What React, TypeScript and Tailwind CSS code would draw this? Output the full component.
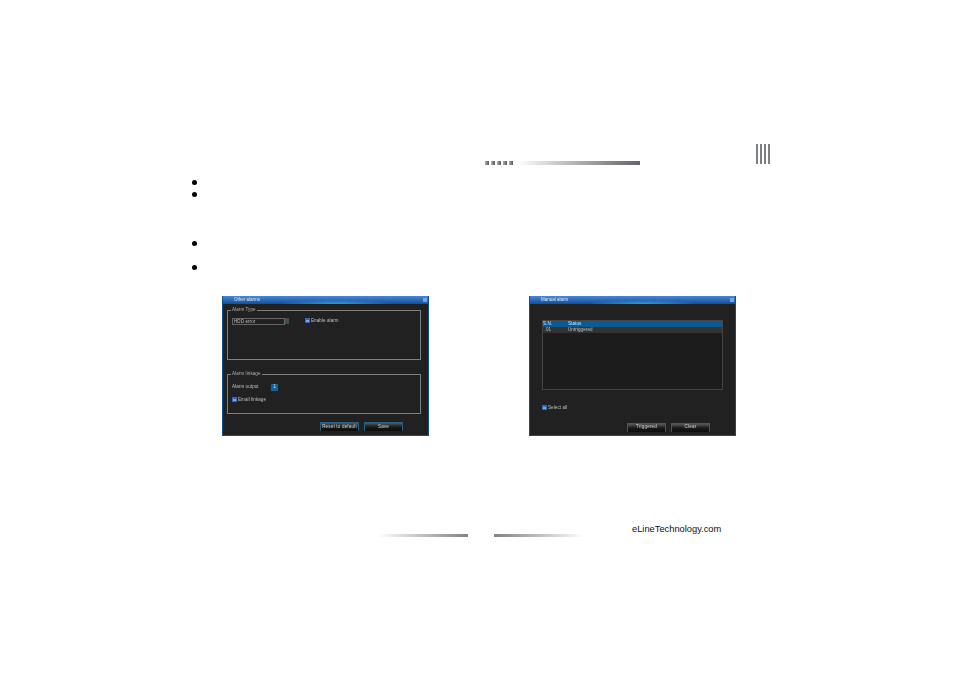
const font = "font-['Liberation_Sans',Arial,sans-serif]";

function Bullet({ className }: { className: string }) {
  return (
    <li className={`flex h-[5px] items-center ${className}`}>
      <span className="h-[5px] w-[5px] rounded-full bg-black" />
    </li>
  );
}

function Checkbox() {
  return (
    <span className="flex h-[5px] w-[5px] items-center justify-center bg-[#2f68c0]">
      <span className="h-[2px] w-[3px] bg-[#7ea6e0]" />
    </span>
  );
}

function Label({ children }: { children: React.ReactNode }) {
  return <span className="pt-[1px] blur-[0.25px]">{children}</span>;
}

function DvrButton({ label }: { label: string }) {
  return (
    <button className="flex h-[9px] w-[39px] items-center justify-center rounded-[1px] border-x border-t border-[#2a5f86] bg-gradient-to-b from-[#55595c] via-[#1a1a1a] to-[#0c0c0c] text-[4.5px] leading-none tracking-[0.2px] text-[#d8d8d8]">
      <span className="blur-[0.2px]">{label}</span>
    </button>
  );
}

function Window({ title, children }: { title: string; children: React.ReactNode }) {
  return (
    <div className="flex h-[140px] w-[207px] flex-col border-x border-b border-[#0f4f8f] bg-[#212121]">
      <div className="flex h-[8px] items-center justify-between bg-[radial-gradient(ellipse_at_55%_100%,#2aa0e8_0%,transparent_35%),linear-gradient(180deg,#4a86d4,#0f4f9c)] pl-[11px] pr-[1px] text-[4.5px] leading-none text-[#dfe8f0]">
        <Label>{title}</Label>
        <span className="h-[4px] w-[4px] bg-[#6fa8dc]" />
      </div>
      {children}
    </div>
  );
}

function Legend({ children }: { children: React.ReactNode }) {
  return (
    <legend className="ml-[3px] px-[1px] text-[4.5px] leading-[6px] tracking-[0.1px] text-[#b0b0b0]">
      <span className="blur-[0.25px]">{children}</span>
    </legend>
  );
}

function OtherAlarm() {
  return (
    <Window title="Other alarms">
      <div className="flex flex-1 flex-col pl-[4px] pr-[7px] pt-[3px] text-[4.5px] leading-none tracking-[0.1px] text-[#c0c0c0]">
        <fieldset className="h-[53px] border border-[#808080]">
          <Legend>Alarm Type</Legend>
          <div className="flex items-start pl-[4px] pt-[5px]">
            <div className="flex h-[7px] w-[53px] items-center border border-[#666] pl-[1px]">
              <Label>HDD error</Label>
            </div>
            <span className="h-[6px] w-[4px] bg-[#37505f]" />
            <span className="ml-[16px] flex items-center gap-[1px]">
              <Checkbox />
              <Label>Enable alarm</Label>
            </span>
          </div>
        </fieldset>
        <fieldset className="mt-[11px] h-[43px] border border-[#808080]">
          <Legend>Alarm linkage</Legend>
          <div className="mt-[7px] flex h-[7px] items-center pl-[4px]">
            <span className="w-[39px]">
              <Label>Alarm output</Label>
            </span>
            <span className="flex h-[7px] w-[7px] items-center justify-center bg-[#14609c] text-[#dfe8f0]">1</span>
          </div>
          <div className="mt-[6px] flex items-center gap-[1px] pl-[4px]">
            <Checkbox />
            <Label>Email linkage</Label>
          </div>
        </fieldset>
        <div className="mt-[8px] flex justify-end gap-[5px] pr-[18px]">
          <DvrButton label="Reset to default" />
          <DvrButton label="Save" />
        </div>
      </div>
    </Window>
  );
}

function ManualAlarm() {
  return (
    <Window title="Manual alarm">
      <div className="flex flex-1 flex-col pl-[12px] pr-[12px] pt-[16px] text-[4.5px] leading-none tracking-[0.1px] text-[#c0c0c0]">
        <div className="h-[70px] border border-[#444] bg-[#1c1c1c]">
          <div className="flex h-[6px] items-center bg-[#0a5a96] text-[#dfe8f0]">
            <span className="w-[25px]">
              <Label>S.N.</Label>
            </span>
            <Label>Status</Label>
          </div>
          <div className="flex h-[6px] items-center bg-[#333333] pl-[3px]">
            <span className="w-[22px]">
              <Label>01</Label>
            </span>
            <Label>Untriggered</Label>
          </div>
        </div>
        <div className="mt-[15px] flex items-center gap-[1px]">
          <Checkbox />
          <Label>Select all</Label>
        </div>
        <div className="mt-[12px] flex justify-end gap-[5px] pr-[13px]">
          <DvrButton label="Triggered" />
          <DvrButton label="Clear" />
        </div>
      </div>
    </Window>
  );
}

export default function App() {
  return (
    <div className={`h-[675px] w-[954px] overflow-hidden bg-white ${font}`}>
      {/* page header strip */}
      <div className="box-content flex h-[21px] items-end pl-[485px] pt-[144px]">
        <div className="flex h-[4px] gap-[2px]">
          {[0, 1, 2, 3, 4].map((i) => (
            <span key={i} className="h-[4px] w-[4px] bg-gradient-to-r from-[#b0b3b6] to-[#55595d]" />
          ))}
        </div>
        <div className="ml-[4px] h-[4px] w-[123px] bg-gradient-to-r from-white to-[#63666a]" />
        <div className="ml-[116px] flex h-[20px] gap-[2px] self-start">
          {[0, 1, 2, 3].map((i) => (
            <span key={i} className="h-[20px] w-[2px] bg-[#7c8084]" />
          ))}
        </div>
      </div>

      <ul className="pl-[192px] pt-[15px]">
        <Bullet className="" />
        <Bullet className="mt-[7px]" />
        <Bullet className="mt-[44px]" />
        <Bullet className="mt-[19px]" />
      </ul>

      <div className="mt-[26px] flex gap-[100px] pl-[222px]">
        <OtherAlarm />
        <ManualAlarm />
      </div>

      {/* page footer */}
      <div className="mt-[89px] flex h-[12px] pl-[378px]">
        <div className="mt-[9px] h-[3px] w-[90px] bg-gradient-to-r from-white to-[#808285]" />
        <div className="ml-[26px] mt-[9px] h-[3px] w-[90px] bg-gradient-to-r from-[#808285] to-white" />
        <span className="-mt-[2px] ml-[48px] text-[9.3px] leading-[12px] text-[#111]">eLineTechnology.com</span>
      </div>
    </div>
  );
}
